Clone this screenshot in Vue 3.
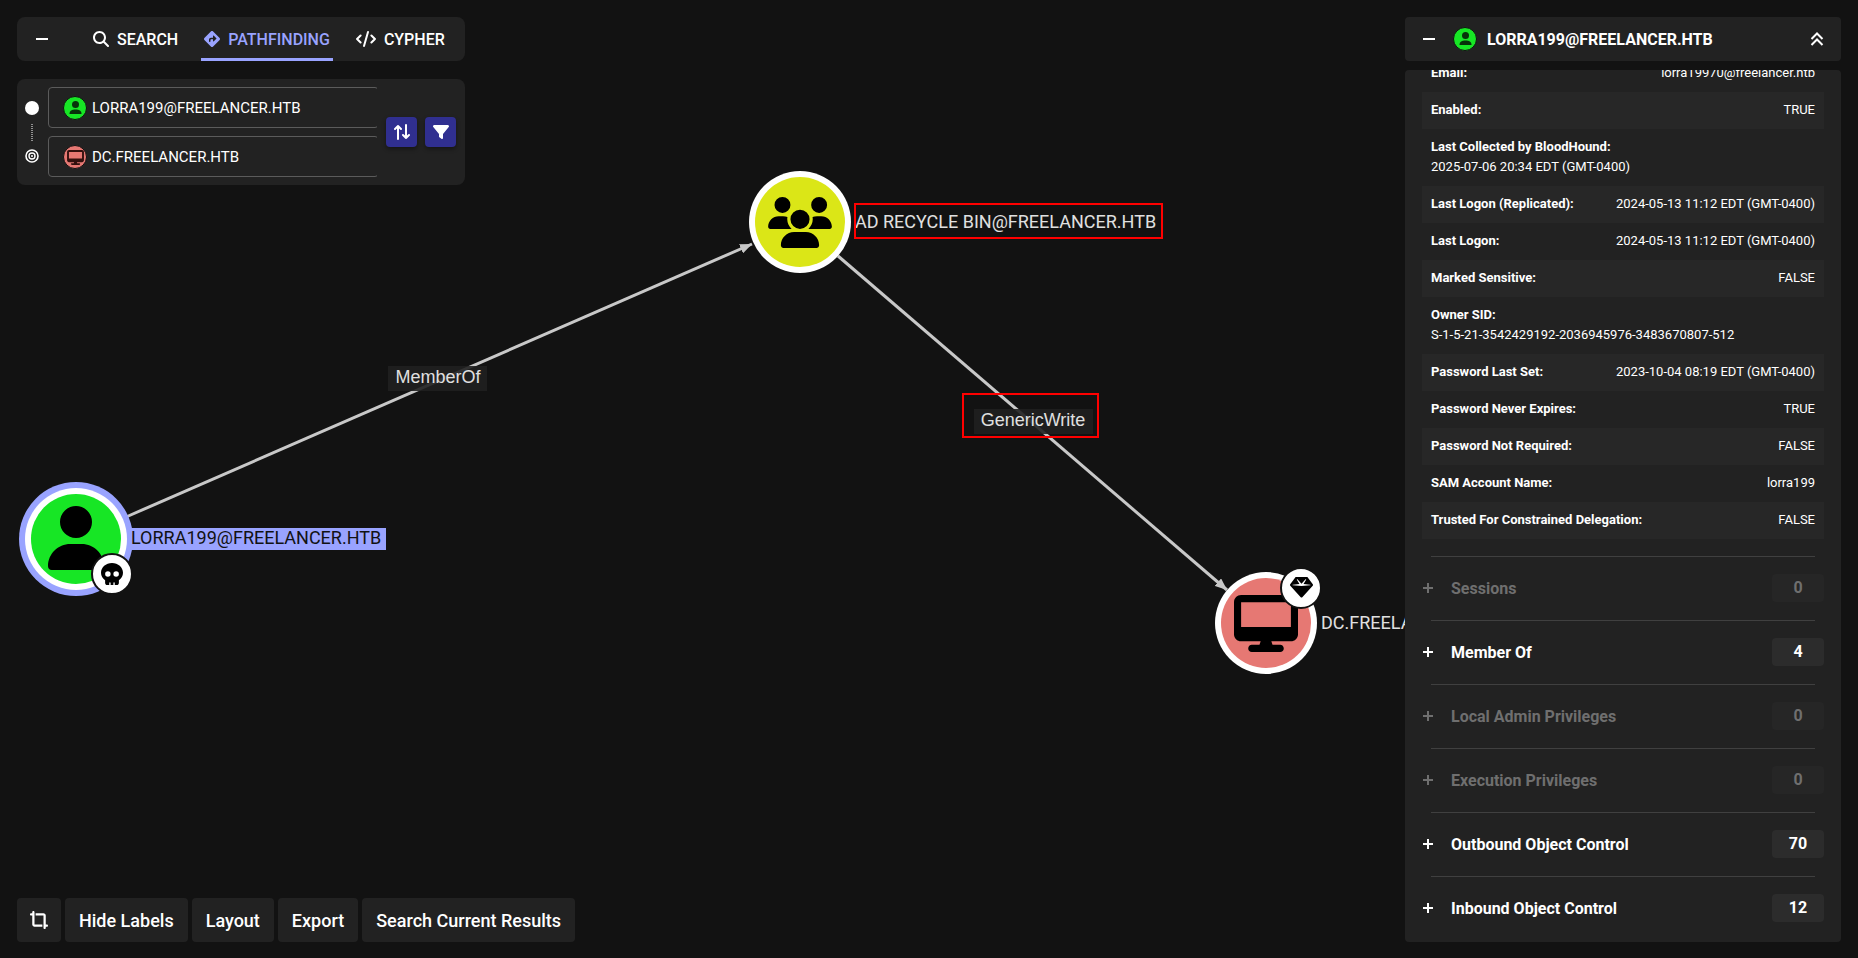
<script setup>
import { ref } from 'vue'

const icons = {
  search: { box: '0 0 512 512', d: 'M416 208c0 45.9-14.9 88.3-40 122.7L502.6 457.4c12.5 12.5 12.5 32.8 0 45.3s-32.8 12.5-45.3 0L330.7 376c-34.4 25.2-76.8 40-122.7 40C93.1 416 0 322.9 0 208S93.1 0 208 0S416 93.1 416 208zM208 352a144 144 0 1 0 0-288 144 144 0 1 0 0 288z' },
  turn: { box: '0 0 512 512', d: 'M227.7 11.7c15.6-15.6 40.9-15.6 56.6 0l216 216c15.6 15.6 15.6 40.9 0 56.6l-216 216c-15.6 15.6-40.9 15.6-56.6 0l-216-216c-15.6-15.6-15.6-40.9 0-56.6l216-216zm87.6 137c-4.6-4.6-11.5-5.9-17.4-3.5s-9.9 8.3-9.9 14.8v56H224c-35.3 0-64 28.7-64 64v48c0 13.3 10.7 24 24 24s24-10.7 24-24V280c0-8.8 7.2-16 16-16h64v56c0 6.5 3.9 12.3 9.9 14.8s12.9 1.1 17.4-3.5l80-80c6.2-6.2 6.2-16.4 0-22.6l-80-80z' },
  user: { box: '0 0 448 512', d: 'M224 256A128 128 0 1 0 224 0a128 128 0 1 0 0 256zm-45.7 48C79.8 304 0 383.8 0 482.3C0 498.7 13.3 512 29.7 512H418.3c16.4 0 29.7-13.3 29.7-29.7C448 383.8 368.2 304 269.7 304H178.3z' },
  desktop: { box: '0 0 576 512', d: 'M64 0C28.7 0 0 28.7 0 64V352c0 35.3 28.7 64 64 64H240l-10.7 32H160c-17.7 0-32 14.3-32 32s14.3 32 32 32H416c17.7 0 32-14.3 32-32s-14.3-32-32-32H346.7L336 416H512c35.3 0 64-28.7 64-64V64c0-35.3-28.7-64-64-64H64zM512 64V288H64V64H512z' },
  users: { box: '0 0 640 512', d: 'M144 0a80 80 0 1 1 0 160A80 80 0 1 1 144 0zM512 0a80 80 0 1 1 0 160A80 80 0 1 1 512 0zM0 298.7C0 239.8 47.8 192 106.7 192h42.7c15.9 0 31 3.5 44.6 9.7c-1.3 7.2-1.9 14.7-1.9 22.3c0 38.2 16.8 72.5 43.3 96c-.2 0-.4 0-.7 0H21.3C9.6 320 0 310.4 0 298.7zM405.3 320c-.2 0-.4 0-.7 0c26.6-23.5 43.3-57.8 43.3-96c0-7.6-.7-15-1.9-22.3c13.6-6.3 28.7-9.7 44.6-9.7h42.7C592.2 192 640 239.8 640 298.7c0 11.8-9.6 21.3-21.3 21.3H405.3zM224 224a96 96 0 1 1 192 0 96 96 0 1 1 -192 0zM128 485.3C128 411.7 187.7 352 261.3 352H378.7C452.3 352 512 411.7 512 485.3c0 14.7-11.9 26.7-26.7 26.7H154.7c-14.7 0-26.7-11.9-26.7-26.7z' },
  skull: { box: '0 0 512 512', d: 'M416 398.9c58.5-41.1 96-104.1 96-174.9C512 100.3 397.4 0 256 0S0 100.3 0 224c0 70.7 37.5 133.8 96 174.9c0 .4 0 .7 0 1.1v64c0 26.5 21.5 48 48 48h48V464c0-8.8 7.2-16 16-16s16 7.2 16 16v48h64V464c0-8.8 7.2-16 16-16s16 7.2 16 16v48h48c26.5 0 48-21.5 48-48V400c0-.4 0-.7 0-1.1zM96 256a64 64 0 1 1 128 0A64 64 0 1 1 96 256zm256-64a64 64 0 1 1 0 128 64 64 0 1 1 0-128z' },
  gem: { box: '0 0 512 512', d: 'M116.7 33.8c4.5-6.1 11.7-9.8 19.3-9.8H376c7.6 0 14.8 3.6 19.3 9.8l112 152c6.8 9.2 6.1 21.9-1.5 30.4l-232 256c-4.5 5-11 7.9-17.8 7.9s-13.2-2.9-17.8-7.9l-232-256c-7.7-8.5-8.3-21.2-1.5-30.4l112-152zm38.5 39.8c-3.3 2.5-4.2 7-2.1 10.5l57.4 95.6L63.3 192c-4.1 .3-7.3 3.8-7.3 8s3.2 7.6 7.3 8l192 16c.4 0 .9 0 1.3 0l192-16c4.1-.3 7.3-3.8 7.3-8s-3.2-7.6-7.3-8L301.5 179.8l57.4-95.6c2.1-3.5 1.2-8.1-2.1-10.5s-7.9-2-10.7 1L256 172.2 165.9 74.6c-2.8-3-7.4-3.4-10.7-1z' },
  filter: { box: '0 0 512 512', d: 'M3.9 54.9C10.5 40.9 24.5 32 40 32H472c15.5 0 29.5 8.9 36.1 22.9s4.6 30.5-5.2 42.5L320 320.9V448c0 12.1-6.8 23.2-17.7 28.6s-23.8 4.3-33.5-3l-64-48c-8.1-6-12.8-15.5-12.8-25.6V320.9L9 97.3C-.7 85.4-2.8 68.8 3.9 54.9z' },
  crop: { box: '0 0 512 512', d: 'M128 32c0-17.7-14.3-32-32-32S64 14.3 64 32V64H32C14.3 64 0 78.3 0 96s14.3 32 32 32H64V384c0 35.3 28.7 64 64 64H352V384H128V32zM384 480c0 17.7 14.3 32 32 32s32-14.3 32-32V448h32c17.7 0 32-14.3 32-32s-14.3-32-32-32H448V128c0-35.3-28.7-64-64-64L160 64v64l224 0V480z' },
}

const start = ref('LORRA199@FREELANCER.HTB')
const destination = ref('DC.FREELANCER.HTB')

const properties = [
  { label: 'Email:', value: 'lorra19970@freelancer.htb' },
  { label: 'Enabled:', value: 'TRUE' },
  { label: 'Last Collected by BloodHound:', value: '2025-07-06 20:34 EDT (GMT-0400)', stacked: true },
  { label: 'Last Logon (Replicated):', value: '2024-05-13 11:12 EDT (GMT-0400)' },
  { label: 'Last Logon:', value: '2024-05-13 11:12 EDT (GMT-0400)' },
  { label: 'Marked Sensitive:', value: 'FALSE' },
  { label: 'Owner SID:', value: 'S-1-5-21-3542429192-2036945976-3483670807-512', stacked: true },
  { label: 'Password Last Set:', value: '2023-10-04 08:19 EDT (GMT-0400)' },
  { label: 'Password Never Expires:', value: 'TRUE' },
  { label: 'Password Not Required:', value: 'FALSE' },
  { label: 'SAM Account Name:', value: 'lorra199' },
  { label: 'Trusted For Constrained Delegation:', value: 'FALSE' },
]

const sections = [
  { label: 'Sessions', count: 0 },
  { label: 'Member Of', count: 4 },
  { label: 'Local Admin Privileges', count: 0 },
  { label: 'Execution Privileges', count: 0 },
  { label: 'Outbound Object Control', count: 70 },
  { label: 'Inbound Object Control', count: 12 },
]

const actions = ['Hide Labels', 'Layout', 'Export', 'Search Current Results']
</script>

<template>
  <main class="explore">
    <svg class="graph" role="img" aria-label="Attack path graph">
      <defs>
        <marker id="arrow" viewBox="0 0 12 10" refX="12" refY="5" markerWidth="12" markerHeight="10" markerUnits="userSpaceOnUse" orient="auto">
          <path d="M0 0L12 5L0 10Z" fill="#c8c8c8" />
        </marker>
      </defs>
      <g class="edges">
        <line x1="126" y1="517" x2="752" y2="244" marker-end="url(#arrow)" />
        <line x1="838" y1="256" x2="1227" y2="590" marker-end="url(#arrow)" />
      </g>
      <g class="edge-label">
        <rect x="388" y="366" width="99" height="25" />
        <text x="438" y="383">MemberOf</text>
        <rect x="974" y="409" width="119" height="25" />
        <text x="1033" y="426">GenericWrite</text>
      </g>

      <rect x="131" y="528" width="255" height="22" fill="#99a3ff" />
      <circle cx="76" cy="539" r="57" fill="#99a3ff" />
      <circle cx="76" cy="539" r="51" fill="#fff" />
      <circle cx="76" cy="539" r="45" fill="#17e625" />
      <svg x="48" y="506" width="56" height="64" :viewBox="icons.user.box"><path :d="icons.user.d" /></svg>
      <circle class="badge" cx="112" cy="574" r="20" />
      <svg x="101" y="563" width="22" height="22" :viewBox="icons.skull.box"><path :d="icons.skull.d" /></svg>
      <text class="node-label selected" x="131" y="544">LORRA199@FREELANCER.HTB</text>

      <circle cx="800" cy="222" r="51" fill="#fff" />
      <circle cx="800" cy="222" r="45" fill="#dbe617" />
      <svg x="768" y="197" width="64" height="51" :viewBox="icons.users.box"><path :d="icons.users.d" /></svg>
      <text class="node-label" x="855" y="228">AD RECYCLE BIN@FREELANCER.HTB</text>

      <circle cx="1266" cy="623" r="51" fill="#fff" />
      <circle cx="1266" cy="623" r="45" fill="#e67873" />
      <svg x="1234" y="595" width="64" height="57" :viewBox="icons.desktop.box"><path :d="icons.desktop.d" /></svg>
      <circle class="badge" cx="1301" cy="588" r="20" />
      <svg x="1290" y="576" width="23" height="23" :viewBox="icons.gem.box"><path :d="icons.gem.d" /></svg>
      <text class="node-label" x="1321" y="629">DC.FREELANCER.HTB</text>

      <rect class="mark" x="855" y="204" width="307" height="34" />
      <rect class="mark" x="963" y="394" width="135" height="43" />
    </svg>

    <div class="left">
      <nav class="panel tabs" role="tablist" aria-label="Explore modes">
        <button class="fold" type="button" aria-label="Collapse search">
          <svg viewBox="0 0 14 14" width="14" height="14"><path class="stroke" d="M1 7H13" /></svg>
        </button>
        <button class="tab" type="button" role="tab">
          <svg :viewBox="icons.search.box" width="16" height="16"><path :d="icons.search.d" /></svg>SEARCH
        </button>
        <button class="tab active" type="button" role="tab" aria-selected="true">
          <svg :viewBox="icons.turn.box" width="16" height="16"><path :d="icons.turn.d" /></svg>PATHFINDING
        </button>
        <button class="tab" type="button" role="tab">
          <svg viewBox="0 0 640 512" width="20" height="16">
            <path d="M392.8 1.2c-17-4.9-34.7 5-39.6 22l-128 448c-4.9 17 5 34.7 22 39.6s34.7-5 39.6-22l128-448c4.9-17-5-34.7-22-39.6z" />
            <path class="code-stroke" d="M493 143L606 256L493 369M147 143L34 256L147 369" />
          </svg>CYPHER
        </button>
      </nav>

      <form class="panel path-form" @submit.prevent>
        <svg class="steps" viewBox="0 0 14 56" width="14" height="56" aria-hidden="true" overflow="visible">
          <circle cx="7" cy="4" r="7" fill="#fff" />
          <path d="M7 20V37" stroke="#fff" stroke-width="1" stroke-dasharray="1 1" />
          <g fill="none" stroke="#fff">
            <circle cx="7" cy="52" r="6" stroke-width="1.6" />
            <circle cx="7" cy="52" r="3" stroke-width="1.4" />
          </g>
          <circle cx="7" cy="52" r="1" fill="#fff" />
        </svg>
        <div class="fields">
          <div class="clip">
            <label class="field">
              <svg viewBox="0 0 24 24" width="24" height="24" aria-hidden="true">
                <circle cx="12" cy="12" r="11.5" fill="#17e625" stroke="#111" />
                <circle cx="12.5" cy="8.5" r="3.5" fill="#07320a" />
                <path d="M6.500 18C6.500 14.500 9 13.500 12.500 13.500S18.500 14.500 18.500 18Z" fill="#07320a" />
              </svg>
              <input v-model="start" type="text" aria-label="Start node" />
            </label>
          </div>
          <div class="clip">
            <label class="field">
              <svg viewBox="0 0 24 24" width="24" height="24" aria-hidden="true">
                <circle cx="12" cy="12" r="11.5" fill="#e67873" stroke="#111" />
                <svg x="4" y="5" width="17" height="15" :viewBox="icons.desktop.box"><path :d="icons.desktop.d" fill="#33100e" /></svg>
              </svg>
              <input v-model="destination" type="text" aria-label="Destination node" />
            </label>
          </div>
        </div>
        <div class="tools">
          <button type="button" aria-label="Swap start and destination">
            <svg viewBox="0 0 16 16" width="16" height="16"><path class="arrows" d="M4 15V2M1 5L4 2L7 5M12 1V14M9 11L12 14L15 11" /></svg>
          </button>
          <button type="button" aria-label="Filter edges">
            <svg :viewBox="icons.filter.box" width="16" height="16"><path :d="icons.filter.d" /></svg>
          </button>
        </div>
      </form>
    </div>

    <div class="actions">
      <button class="square" type="button" aria-label="Reset view">
        <svg :viewBox="icons.crop.box" width="18" height="18"><path :d="icons.crop.d" /></svg>
      </button>
      <button v-for="action in actions" :key="action" type="button">{{ action }}</button>
    </div>

    <aside class="right">
      <header class="entity">
        <button class="fold" type="button" aria-label="Collapse entity panel">
          <svg viewBox="0 0 14 14" width="14" height="14"><path class="stroke" d="M1 7H13" /></svg>
        </button>
        <svg viewBox="0 0 24 24" width="24" height="24" aria-hidden="true">
          <circle cx="12" cy="12" r="11.5" fill="#17e625" stroke="#111" />
          <circle cx="12.5" cy="8.5" r="3.5" fill="#07320a" />
          <path d="M6.500 18C6.500 14.500 9 13.500 12.500 13.500S18.500 14.500 18.500 18Z" fill="#07320a" />
        </svg>
        <h1>LORRA199@FREELANCER.HTB</h1>
        <button class="fold" type="button" aria-label="Collapse all sections">
          <svg viewBox="0 0 14 14" width="14" height="14"><path class="stroke" d="M1.500 7L7 1.500L12.500 7M1.500 13L7 7.500L12.500 13" /></svg>
        </button>
      </header>

      <section class="details">
        <dl>
          <div v-for="item in properties" :key="item.label" class="row" :class="{ stacked: item.stacked }">
            <dt>{{ item.label }}</dt>
            <dd>{{ item.value }}</dd>
          </div>
        </dl>
        <button v-for="section in sections" :key="section.label" class="section" type="button" :disabled="section.count === 0">
          <svg viewBox="0 0 12 12" width="12" height="12"><path class="stroke" d="M1 6H11M6 1V11" /></svg>
          <span class="name">{{ section.label }}</span>
          <span class="count">{{ section.count }}</span>
        </button>
      </section>
    </aside>
  </main>
</template>

<style>
body {
  margin: 0;
  background: #121212;
}
</style>

<style scoped>
.explore {
  position: relative;
  box-sizing: border-box;
  display: grid;
  grid-template-columns: 448px 1fr 436px;
  grid-template-rows: 1fr auto;
  height: 100vh;
  padding: 17px 17px 16px;
  overflow: hidden;
  background: #121212;
  color: #fff;
  font-family: Roboto, "Liberation Sans", sans-serif;
  font-size: 16px;
}

button {
  display: flex;
  align-items: center;
  padding: 0;
  border: 0;
  background: none;
  color: inherit;
  font: inherit;
  cursor: pointer;
}

svg {
  flex: none;
  fill: currentColor;
}

.graph {
  position: absolute;
  inset: 0;
  width: 100%;
  height: 100%;
  fill: #000;
}

.graph svg {
  fill: #000;
}

.edges line {
  stroke: #c8c8c8;
  stroke-width: 3;
}

.edge-label rect {
  fill: #202020;
  fill-opacity: 0.9;
}

.edge-label text {
  fill: #e0e0e0;
  font-family: "Liberation Sans", Arial, sans-serif;
  font-size: 18px;
  text-anchor: middle;
}

.node-label {
  fill: #e0e0e0;
  font-size: 18px;
}

.node-label.selected {
  fill: #121212;
}

.badge {
  fill: #fff;
  stroke: #121212;
  stroke-width: 2;
}

.mark {
  fill: none;
  stroke: #f00;
  stroke-width: 2;
}

.stroke {
  fill: none;
  stroke: currentColor;
  stroke-width: 2;
}

.left,
.right,
.actions {
  position: relative;
  z-index: 1;
}

.left {
  display: flex;
  flex-direction: column;
  gap: 18px;
}

.panel {
  border-radius: 8px;
  background: #222;
}

.tabs {
  display: flex;
  height: 44px;
  padding-left: 18px;
}

.tabs .fold {
  margin-right: 41px;
}

.tab {
  gap: 8px;
  padding: 0 3px;
  border-top: 3px solid transparent;
  border-bottom: 3px solid transparent;
  font-weight: 500;
}

.tab + .tab {
  margin-left: 20px;
}

.tab.active {
  border-bottom-color: #99a3ff;
  color: #99a3ff;
}

.code-stroke {
  fill: none;
  stroke: currentColor;
  stroke-width: 64;
  stroke-linecap: round;
  stroke-linejoin: round;
}

.path-form {
  display: flex;
  align-items: center;
  padding: 8px 9px 8px 8px;
}

.fields {
  display: flex;
  flex: 1;
  flex-direction: column;
  gap: 8px;
  margin: 0 9px;
}

.clip {
  overflow: hidden;
}

.field {
  display: flex;
  align-items: center;
  box-sizing: border-box;
  height: 41px;
  margin-right: -2px;
  padding: 0 14px;
  border: 1px solid #5b5b5b;
  border-radius: 4px;
}

.field input {
  flex: 1;
  min-width: 0;
  margin-left: 5px;
  padding: 0;
  border: 0;
  outline: 0;
  background: none;
  color: inherit;
  font: inherit;
  font-size: 15px;
}

.tools {
  display: flex;
  gap: 8px;
}

.tools button {
  justify-content: center;
  width: 31px;
  height: 30px;
  border-radius: 4px;
  background: #302f90;
  box-shadow: 0 2px 4px rgba(0, 0, 0, 0.4);
}

.arrows {
  fill: none;
  stroke: currentColor;
  stroke-width: 2;
  stroke-linecap: round;
  stroke-linejoin: round;
}

.actions {
  display: flex;
  grid-column: 1 / 3;
  grid-row: 2;
  gap: 4px;
}

.actions button {
  justify-content: center;
  height: 44px;
  padding: 0 14px;
  border-radius: 4px;
  background: #222;
  font-size: 18px;
  font-weight: 500;
  white-space: nowrap;
}

.actions .square {
  padding: 0 13px;
}

.right {
  display: flex;
  flex-direction: column;
  grid-column: 3;
  grid-row: 1 / 3;
  gap: 9px;
  min-height: 0;
}

.entity {
  display: flex;
  flex: none;
  align-items: center;
  box-sizing: border-box;
  height: 44px;
  padding: 0 17px;
  border-radius: 4px;
  background: #222;
}

.entity .fold + svg {
  margin: 0 10px 0 17px;
}

.entity h1 {
  flex: 1;
  margin: 0;
  font-size: 16px;
  font-weight: 700;
}

.details {
  display: flex;
  flex: 1;
  flex-direction: column;
  justify-content: flex-end;
  min-height: 0;
  padding: 0 17px 2px;
  overflow: hidden;
  border-radius: 4px;
  background: #222;
}

dl {
  flex: none;
  margin: 0 0 17px;
  font-size: 13px;
  line-height: 20px;
}

.row {
  display: flex;
  justify-content: space-between;
  padding: 8px 9px 9px;
}

.row.stacked {
  display: block;
}

.row:nth-child(even) {
  background: #272727;
}

dt {
  font-weight: 700;
}

dd {
  margin: 0;
}

.section {
  position: relative;
  flex: none;
  height: 64px;
  text-align: left;
}

.section::before {
  position: absolute;
  top: 0;
  right: 9px;
  left: 9px;
  height: 1px;
  background: #404040;
  content: "";
}

.section .name {
  flex: 1;
  margin-left: 17px;
  font-weight: 700;
}

.section .count {
  width: 52px;
  border-radius: 4px;
  background: #2c2c2c;
  font-weight: 700;
  line-height: 28px;
  text-align: center;
}

.section:disabled {
  color: #6f6f6f;
}

.section:disabled .count {
  background: #262626;
}
</style>
